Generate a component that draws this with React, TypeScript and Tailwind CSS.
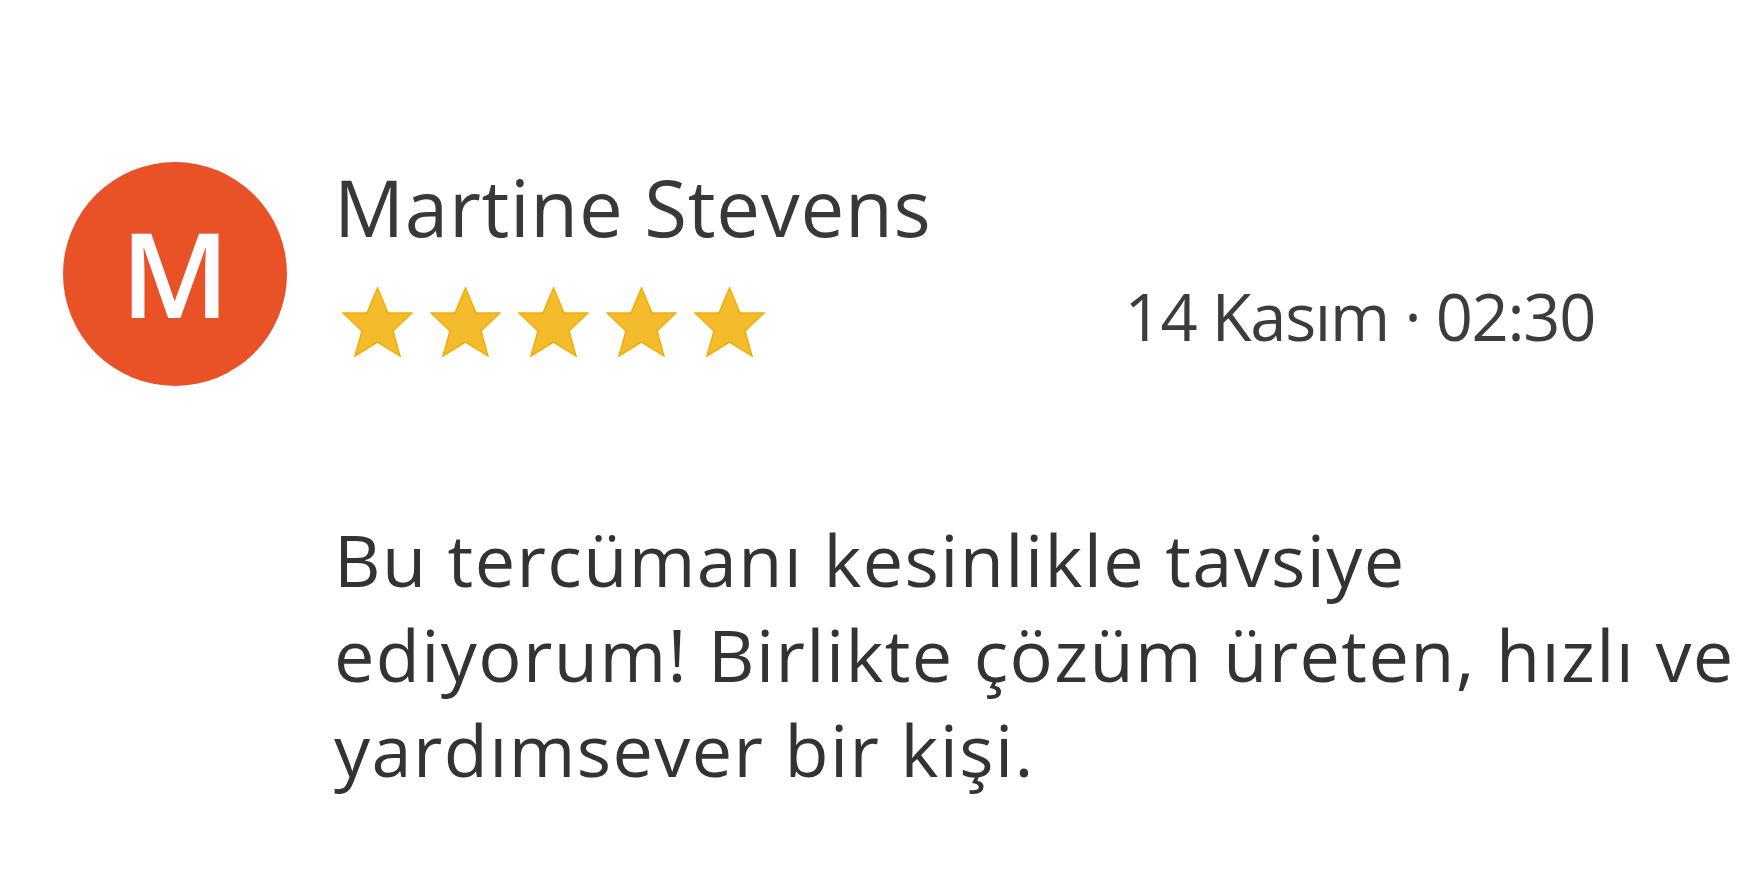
import React from 'react';

const Star: React.FC = () => (
  <svg width="71" height="70" viewBox="0 0 71 70" className="block">
    <polygon
      points="35.5,1 46,26 70,26 51,44 58,69 35.5,55 13,69 20,44 1,26 25,26"
      fill="#F4BB2C"
      stroke="#F2AE08"
      strokeWidth="1.5"
      strokeLinejoin="miter"
    />
  </svg>
);

export default function App() {
  return (
    <div className="w-[1754px] h-[886px] bg-white overflow-hidden font-['Open_Sans',sans-serif]">
      <div className="flex pt-[162px] pl-[63px]">
        {/* avatar */}
        <div className="w-[224px] h-[224px] shrink-0 rounded-full bg-[#E95127] flex items-center justify-center">
          <span className="text-white text-[118px] leading-none font-semibold -mt-[2px]">M</span>
        </div>

        <div className="ml-[47px] flex flex-col">
          <div className="mt-[6px] text-[78px] leading-[78px] tracking-[0.7px] text-[#383838] whitespace-nowrap">Martine Stevens</div>

          <div className="mt-[37px] flex items-start w-[1261px]">
            <div className="mt-[4px] ml-[8px] flex gap-[17px]">
              <Star />
              <Star />
              <Star />
              <Star />
              <Star />
            </div>
            <div className="ml-auto mt-[1px] text-[65px] leading-[65px] tracking-[-1.3px] text-[#3c3c3c] whitespace-nowrap">14 Kasım · 02:30</div>
          </div>

          <p className="mt-[155px] text-[72px] leading-[95px] tracking-[1.4px] text-[#333333] whitespace-nowrap">
            Bu tercümanı kesinlikle tavsiye
            <br />
            ediyorum! Birlikte çözüm üreten, hızlı ve
            <br />
            yardımsever bir kişi.
          </p>
        </div>
      </div>
    </div>
  );
}
